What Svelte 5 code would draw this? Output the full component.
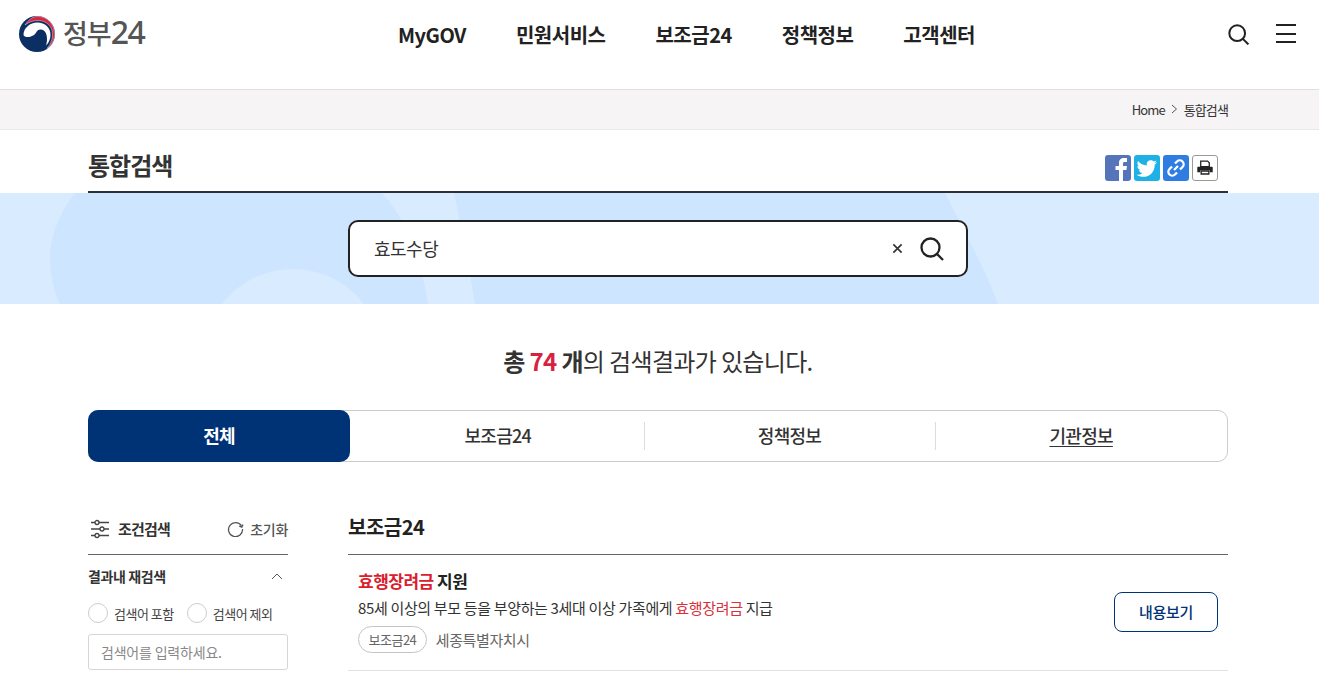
<script>
  const navItems = ['MyGOV', '민원서비스', '보조금24', '정책정보', '고객센터'];
  const tabs = ['보조금24', '정책정보', '기관정보'];
</script>

<header class="top">
  <a class="logo" href="#home">
    <svg width="38" height="38" viewBox="0 0 38 38" aria-hidden="true">
      <circle cx="19" cy="19" r="18" fill="#0b2f63" />
      <path d="M7 10C11 4 15 1.500 20 1.500C29 1.500 36.500 9 36.500 19C36.500 25 34 30 29 33.500C33 29 34.500 24 34.500 19C34.500 11 28 5.500 20 5.500C15 5.500 11 7 7 10Z" fill="#d7263d" stroke="#fff" stroke-width="0.400" />
      <path d="M5.500 20C5.500 13 12 7.500 19.500 7.500C27 7.500 32.500 12.500 32.500 19.500C32.500 24 31 27.500 28 30.500C30 25 29.500 15 23 14.500C19 14 18.500 18 16 20C13 22 7 23.500 5.500 20Z" fill="#fff" />
    </svg>
    <span class="logo-text">정부<span class="logo-num">24</span></span>
  </a>
  <nav class="gnb">
    {#each navItems as item}
      <a href="#menu">{item}</a>
    {/each}
  </nav>
  <div class="top-icons">
    <svg width="21" height="21" viewBox="0 0 24 24" fill="none" stroke="#222" stroke-width="2.300" aria-hidden="true">
      <circle cx="10.500" cy="10.500" r="9" />
      <path d="M17 17l6.300 6.300" />
    </svg>
    <div class="burger"><i></i><i></i><i></i></div>
  </div>
</header>

<div class="crumbs">
  <div class="wrap crumbs-in">
    <span>Home</span>
    <svg width="7" height="10" viewBox="0 0 7 10" fill="none" stroke="#555" aria-hidden="true"><path d="M1 1l4.500 4L1 9" /></svg>
    <span>통합검색</span>
  </div>
</div>

<div class="wrap title-row">
  <h1>통합검색</h1>
  <div class="share">
    <span class="sq fb">
      <svg width="26" height="26" viewBox="0 0 26 26" aria-hidden="true"><path d="M14 26V15h-3.500v-4H14V8c0-3.500 2-5 5-5h3v4h-2.200c-1.300 0-1.800.6-1.800 1.800V11h4l-.6 4H18v11z" fill="#fff" /></svg>
    </span>
    <span class="sq tw">
      <svg width="26" height="26" viewBox="0 0 26 26" aria-hidden="true"><path d="M23 7.200c-.8.400-1.500.6-2.400.7.900-.5 1.500-1.300 1.800-2.300-.8.500-1.700.8-2.600 1-1.700-1.800-4.500-1.700-6 0-1 1-1.300 2.500-1 3.900C9.300 10.300 6 8.600 4 6c-1.100 1.900-.6 4.300 1.300 5.500-.7 0-1.300-.2-1.900-.5 0 2 1.400 3.700 3.300 4.100-.6.200-1.200.2-1.900.1.500 1.600 2 2.800 3.800 2.800-1.800 1.400-4 2-6.100 1.800 5 3.100 11.200 2.600 15-1.400 2.200-2.300 3.300-5.400 3.200-8.600.9-.6 1.700-1.400 2.300-2.400z" fill="#fff" /></svg>
    </span>
    <span class="sq ln">
      <svg width="26" height="26" viewBox="0 0 26 26" fill="none" stroke="#fff" stroke-width="2.300" aria-hidden="true"><path d="M11 15l4-4M12 8.500l2-2a3.600 3.600 0 0 1 5.500 5.500l-2.500 2.500M14 17.500l-2 2A3.600 3.600 0 0 1 6.500 14L9 11.500" /></svg>
    </span>
    <span class="sq pr">
      <svg width="24" height="24" viewBox="-2 -2 28 28" aria-hidden="true"><path d="M7 4h8l2 2v4.500H7z" fill="none" stroke="#222" stroke-width="1.500" /><path d="M4 10.500h16a1 1 0 0 1 1 1V17h-3.500v-2.500h-11V17H3v-5.500a1 1 0 0 1 1-1z" fill="#222" /><path d="M7.500 15.500h9V19h-9z" fill="none" stroke="#222" stroke-width="1.500" /></svg>
    </span>
  </div>
</div>

<section class="band">
  <svg class="shapes" width="1319" height="111" viewBox="0 0 1319 111" aria-hidden="true">
    <path d="M75 0C55 25 50 50 50 65C50 85 55 100 60 111H428C420 60 405 25 382 0Z" fill="#cee5ff" />
    <path d="M454 0C462 40 470 80 475 111H998C985 75 960 30 945 0Z" fill="#cee5ff" />
    <circle cx="293" cy="165.500" r="89.500" fill="#d9ebff" />
  </svg>
  <div class="searchbox">
    <span class="query">효도수당</span>
    <svg class="clear" width="11" height="11" viewBox="0 0 12 12" stroke="#333" stroke-width="1.800" aria-hidden="true"><path d="M1.500 1.500l9 9M10.500 1.500l-9 9" /></svg>
    <svg class="go" width="26" height="26" viewBox="0 0 26 26" fill="none" stroke="#222" stroke-width="2.300" aria-hidden="true">
      <circle cx="11.500" cy="11.500" r="9" />
      <path d="M18 18l6 6" />
    </svg>
  </div>
</section>

<div class="wrap">
  <p class="summary"><b>총 <em>74</em> 개</b>의 검색결과가 있습니다.</p>

  <div class="tabs">
    <a class="tab active" href="#all">전체</a>
    {#each tabs as tab, i}
      <a class="tab" class:sep={i > 0} class:under={i === 2} href="#tab">{tab}</a>
    {/each}
  </div>

  <div class="content">
    <aside class="side">
      <div class="side-head">
        <svg width="20" height="20" viewBox="0 0 20 20" fill="none" stroke="#444" stroke-width="1.300" aria-hidden="true">
          <path d="M1 3.500h4M9 3.500h10M1 10h9M14 10h5M1 16.500h4M9 16.500h10" />
          <circle cx="7" cy="3.500" r="2" /><circle cx="12" cy="10" r="2" /><circle cx="7" cy="16.500" r="2" />
        </svg>
        <strong>조건검색</strong>
        <span class="reset">
          <svg width="17" height="17" viewBox="0 0 17 17" fill="none" stroke="#555" stroke-width="1.300" aria-hidden="true">
            <path d="M14.500 6A7 7 0 1 0 15.500 9" /><path d="M16 4.500l-1.200 2.600-2.600-.9" />
          </svg>
          초기화
        </span>
      </div>
      <div class="acc">
        <span>결과내 재검색</span>
        <svg width="12" height="7" viewBox="0 0 12 7" fill="none" stroke="#555" aria-hidden="true"><path d="M1 6l5-5 5 5" /></svg>
      </div>
      <div class="radios">
        <label><i></i>검색어 포함</label>
        <label><i></i>검색어 제외</label>
      </div>
      <div class="field">검색어를 입력하세요.</div>
    </aside>

    <main class="results">
      <h2>보조금24</h2>
      <article class="row">
        <div class="row-body">
          <h3><span class="hit">효행장려금</span> 지원</h3>
          <p>85세 이상의 부모 등을 부양하는 3세대 이상 가족에게 <span class="hit2">효행장려금</span> 지급</p>
          <div class="meta">
            <span class="pill">보조금24</span>
            <span class="org">세종특별자치시</span>
          </div>
        </div>
        <a class="view" href="#view">내용보기</a>
      </article>
    </main>
  </div>
</div>

<style>
  :global(body) {
    margin: 0;
    background: #fff;
    color: #222;
    font-family: "Noto Sans CJK KR", "Noto Sans", sans-serif;
    overflow: hidden;
  }

  a {
    color: inherit;
    text-decoration: none;
  }

  .wrap {
    width: 1140px;
    margin-left: 88px;
    box-sizing: border-box;
  }

  .top {
    height: 90px;
    position: relative;
    display: flex;
    justify-content: center;
    padding-top: 20px;
    box-sizing: border-box;
    border-bottom: 1px solid #e0e0e0;
  }

  .logo {
    position: absolute;
    left: 18px;
    top: 14px;
    display: flex;
    align-items: center;
    gap: 7px;
  }

  .logo-text {
    font-size: 27px;
    line-height: 36px;
    margin-bottom: 2px;
    color: #555;
    font-weight: 500;
    letter-spacing: -1px;
  }

  .logo-num {
    font-family: "Noto Sans", sans-serif;
    font-size: 32px;
    font-weight: 500;
    letter-spacing: -1.500px;
  }

  .gnb {
    display: flex;
    gap: 50px;
    font-size: 20px;
    font-weight: 700;
    line-height: 30px;
    letter-spacing: -0.500px;
    margin-left: 54px;
  }

  .top-icons {
    position: absolute;
    right: 23px;
    top: 24px;
    display: flex;
    align-items: flex-start;
    gap: 27px;
  }

  .burger {
    width: 20px;
    height: 19px;
    display: flex;
    flex-direction: column;
    justify-content: space-between;
  }

  .burger i {
    display: block;
    height: 2px;
    background: #222;
  }

  .crumbs {
    height: 40px;
    background: #f6f4f5;
    border-bottom: 1px solid #e8e8e8;
    box-sizing: border-box;
  }

  .crumbs-in {
    display: flex;
    justify-content: flex-end;
    align-items: center;
    gap: 6px;
    height: 38px;
    font-size: 13px;
    letter-spacing: -0.900px;
    color: #333;
  }

  .title-row {
    height: 63px;
    display: flex;
    justify-content: space-between;
    align-items: flex-start;
    border-bottom: 2px solid #2b2f38;
  }

  h1 {
    margin: 17px 0 0;
    font-size: 24px;
    line-height: 36px;
    font-weight: 700;
    letter-spacing: -1px;
    color: #333;
  }

  .share {
    display: flex;
    gap: 3px;
    margin-top: 25px;
    margin-right: 10px;
  }

  .sq {
    width: 26px;
    height: 26px;
    border-radius: 3px;
    overflow: hidden;
    display: block;
    box-sizing: border-box;
  }

  .fb { background: #5674b9; }
  .tw { background: #1fb1e6; }
  .ln { background: #2f7de1; }

  .pr {
    border: 1px solid #999;
    background: #fff;
  }

  .band {
    position: relative;
    height: 111px;
    background: #d9ebff;
    overflow: hidden;
    display: flex;
    justify-content: flex-start;
    align-items: center;
    padding-left: 348px;
    box-sizing: border-box;
  }

  .shapes {
    position: absolute;
    left: 0;
    top: 0;
  }

  .searchbox {
    position: relative;
    width: 620px;
    height: 57px;
    box-sizing: border-box;
    background: #fff;
    border: 2px solid #222;
    border-radius: 10px;
    display: flex;
    align-items: center;
    padding: 0 21px 0 24px;
  }

  .query {
    flex: 1;
    font-size: 18px;
    letter-spacing: -0.500px;
    color: #333;
    margin-bottom: 2px;
  }

  .clear {
    margin-right: 16px;
  }

  .summary {
    margin: 39px 0 0;
    text-align: center;
    font-size: 24px;
    line-height: 36px;
    letter-spacing: -0.650px;
    color: #333;
  }

  .summary b {
    font-weight: 700;
  }

  .summary em {
    font-style: normal;
    color: #d9213f;
  }

  .tabs {
    margin-top: 31px;
    height: 52px;
    display: grid;
    grid-template-columns: 263px 1fr 1fr 1fr;
    border: 1px solid #ccc;
    border-radius: 10px;
    box-sizing: border-box;
  }

  .tab {
    position: relative;
    display: flex;
    align-items: center;
    justify-content: center;
    padding-bottom: 2px;
    font-size: 18px;
    font-weight: 500;
    letter-spacing: -0.700px;
    color: #333;
  }

  .tab.active {
    margin: -1px 2px -1px -1px;
    background: #003375;
    border-radius: 10px;
    color: #fff;
    font-weight: 700;
  }

  .tab.sep::before {
    content: "";
    position: absolute;
    left: 0;
    top: 11px;
    bottom: 11px;
    width: 1px;
    background: #ddd;
  }

  .tab.under {
    text-decoration: underline;
    text-underline-offset: 3px;
  }

  .content {
    display: flex;
    gap: 60px;
    margin-top: 46px;
  }

  .side {
    width: 200px;
    flex: none;
  }

  .side-head {
    display: flex;
    align-items: center;
    height: 47px;
    border-bottom: 1px solid #666;
    font-size: 15px;
    letter-spacing: -0.800px;
    padding-bottom: 5px;
    box-sizing: border-box;
  }

  .side-head > svg {
    margin: 0 8px 0 2px;
  }

  .side-head strong {
    flex: 1;
    font-weight: 700;
    color: #333;
  }

  .reset {
    display: flex;
    align-items: center;
    gap: 6px;
    font-size: 14px;
    font-weight: 500;
    letter-spacing: -0.300px;
    color: #555;
  }

  .acc {
    display: flex;
    justify-content: space-between;
    align-items: center;
    height: 42px;
    padding-right: 5px;
    font-size: 14px;
    font-weight: 700;
    letter-spacing: -0.400px;
    color: #333;
  }

  .radios {
    display: flex;
    gap: 13px;
    margin-top: 6px;
    font-size: 13px;
    letter-spacing: -0.500px;
    color: #444;
  }

  .radios label {
    display: flex;
    align-items: center;
    gap: 6px;
  }

  .radios i {
    width: 20px;
    height: 20px;
    border: 1px solid #ccc;
    border-radius: 50%;
    box-sizing: border-box;
  }

  .field {
    margin-top: 11px;
    height: 36px;
    border: 1px solid #d5d5d5;
    border-radius: 3px;
    box-sizing: border-box;
    padding-left: 12px;
    display: flex;
    align-items: center;
    font-size: 14px;
    letter-spacing: -0.200px;
    color: #888;
  }

  .results {
    flex: 1;
  }

  h2 {
    margin: 0;
    height: 46px;
    line-height: 38px;
    font-size: 20px;
    font-weight: 700;
    letter-spacing: -0.500px;
    border-bottom: 1px solid #666;
  }

  .row {
    display: flex;
    align-items: center;
    justify-content: space-between;
    height: 116px;
    padding: 0 10px;
    border-bottom: 1px solid #e2e2e2;
    box-sizing: border-box;
  }

  .row-body {
    padding-bottom: 3px;
  }

  h3 {
    margin: 0;
    font-size: 17px;
    line-height: 24px;
    font-weight: 700;
    letter-spacing: -0.500px;
  }

  .hit { color: #d9202c; }
  .hit2 { color: #d9303c; }

  .row p {
    margin: 4px 0 0;
    font-size: 15px;
    line-height: 21px;
    letter-spacing: -0.340px;
    color: #333;
  }

  .meta {
    display: flex;
    align-items: center;
    gap: 9px;
    margin-top: 8px;
    font-size: 15px;
    letter-spacing: -0.400px;
    color: #666;
  }

  .pill {
    height: 27px;
    padding: 0 9.500px;
    border: 1px solid #c4c4c4;
    border-radius: 14px;
    box-sizing: border-box;
    display: flex;
    align-items: center;
    font-size: 13px;
    letter-spacing: -0.500px;
  }

  .view {
    width: 104px;
    height: 40px;
    margin-bottom: 2px;
    border: 1px solid #003375;
    border-radius: 8px;
    box-sizing: border-box;
    display: flex;
    align-items: center;
    justify-content: center;
    font-size: 15px;
    font-weight: 500;
    letter-spacing: -0.300px;
    color: #003375;
  }
</style>
